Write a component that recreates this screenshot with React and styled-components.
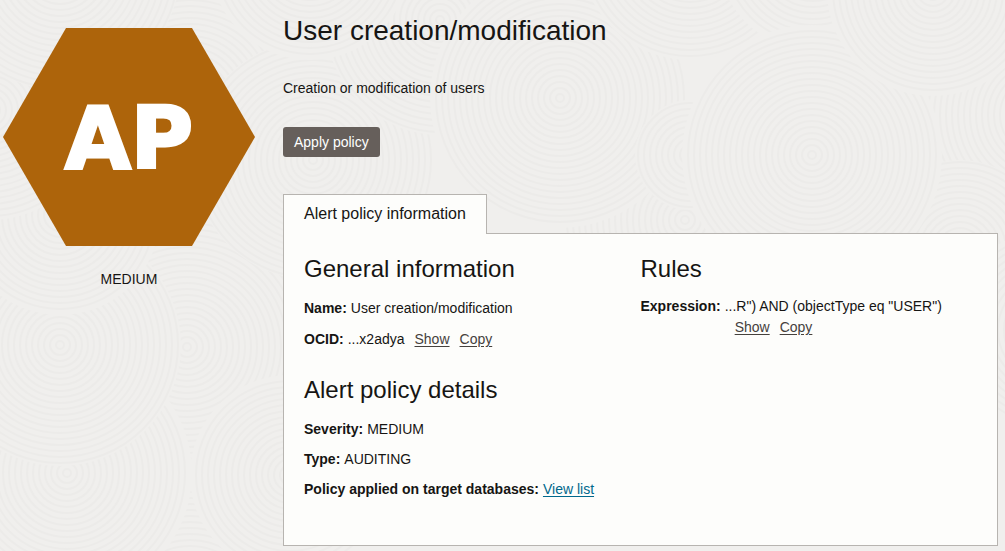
import React from "react";
import styled, { createGlobalStyle } from "styled-components";

const GlobalStyle = createGlobalStyle`
  *, *::before, *::after { box-sizing: border-box; }
  body {
    margin: 0;
    background: #f0efed;
    color: #161513;
    font-family: "Liberation Sans", Arial, sans-serif;
    font-size: 14px;
    line-height: 20px;
  }
`;

const Page = styled.div`
  position: relative;
  min-height: 100vh;
  overflow: hidden;
`;

const Backdrop = styled.svg`
  position: absolute;
  inset: 0;
  width: 100%;
  height: 100%;
  fill: none;
  stroke: #ecebe9;
  stroke-width: 2;
`;

const Layout = styled.div`
  position: relative;
  display: grid;
  grid-template-columns: 258px minmax(0, 1fr);
  column-gap: 25px;
  padding: 13px 7px 5px 0;
`;

const Sidebar = styled.aside`
  display: flex;
  flex-direction: column;
  align-items: center;
  gap: 23px;
  padding-top: 15px;
`;

const Hexagon = styled.div`
  display: flex;
  align-items: center;
  justify-content: center;
  width: 252px;
  height: 218px;
  padding-top: 2px;
  background: #ad640b;
  clip-path: polygon(25% 0, 75% 0, 100% 50%, 75% 100%, 25% 100%, 0 50%);
  color: #fff;
  font-family: "DejaVu Sans", "Arial Black", sans-serif;
  font-size: 85px;
  font-weight: 700;
  line-height: 1;
  -webkit-text-stroke: 3px #fff;
`;

const Status = styled.span``;

const Main = styled.main`
  display: flex;
  flex-direction: column;
  align-items: flex-start;
`;

const Title = styled.h1`
  margin: 0 0 29px;
  font-size: 28px;
  font-weight: 400;
  line-height: 36px;
`;

const Description = styled.p`
  margin: 0 0 29px;
`;

const PrimaryButton = styled.button`
  height: 30px;
  margin: 0 0 37px;
  padding: 0 11px;
  border: 0;
  border-radius: 3px;
  background: #665f5b;
  color: #fff;
  font: inherit;
  cursor: pointer;
`;

const Tab = styled.button`
  position: relative;
  z-index: 1;
  height: 40px;
  margin-bottom: -1px;
  padding: 0 20px 2px;
  border: 1px solid #b7b4b0;
  border-bottom: 0;
  background: #fdfdfb;
  color: inherit;
  font: inherit;
  font-size: 16px;
  cursor: pointer;
`;

const Panel = styled.section`
  display: grid;
  grid-template-columns: 1fr 1fr;
  align-self: stretch;
  padding: 20px 20px 45px;
  border: 1px solid #b7b4b0;
  background: #fdfdfb;
`;

const Column = styled.div`
  display: flex;
  flex-direction: column;
  gap: 25px;
`;

const Heading = styled.h2`
  margin: 0;
  font-size: 24px;
  font-weight: 400;
  line-height: 30px;
`;

const Details = styled.dl`
  display: flex;
  flex-direction: column;
  gap: ${(p) => p.$gap || 9}px;
  margin: ${(p) => p.$top || 14}px 0 0;
`;

const Row = styled.div`
  display: flex;
  gap: 4px;
  line-height: 21px;
`;

const Label = styled.dt`
  flex: none;
  font-weight: 700;
`;

const Value = styled.dd`
  margin: 0;
`;

const Link = styled.a`
  color: #00688c;
  text-decoration: underline;
  text-underline-offset: 2px;
`;

const Action = styled(Link)`
  display: inline-block;
  margin-left: 10px;
  color: #45413d;
`;

const discs = [
  [187, 347, 130], [440, 345, 125], [-20, 500, 110], [190, 610, 120],
  [67, 473, 125], [290, 475, 100], [60, 345, 121], [60, 215, 100],
  [190, 100, 125], [-10, 110, 110], [60, -30, 120], [313, 160, 120],
  [440, 20, 115], [310, -40, 100], [685, 220, 125], [560, 98, 130],
  [690, -50, 110], [690, 155, 55], [1040, 115, 115], [960, 250, 90],
  [813, -45, 95], [812, 155, 130], [933, -10, 106], [1050, 330, 100],
];

function Waves() {
  return (
    <Backdrop aria-hidden="true">
      {discs.map(([x, y, radius]) => (
        <g key={`${x},${y}`}>
          <circle cx={x} cy={y} r={radius} fill="#f0efed" stroke="none" />
          {Array.from({ length: Math.floor(radius / 6) }, (_, i) => (
            <circle key={i} cx={x} cy={y} r={4 + i * 6} />
          ))}
        </g>
      ))}
    </Backdrop>
  );
}

export default function App() {
  return (
    <Page>
      <GlobalStyle />
      <Waves />
      <Layout>
        <Sidebar>
          <Hexagon>AP</Hexagon>
          <Status>MEDIUM</Status>
        </Sidebar>
        <Main>
          <Title>User creation/modification</Title>
          <Description>Creation or modification of users</Description>
          <PrimaryButton type="button">Apply policy</PrimaryButton>
          <Tab type="button" role="tab" id="info-tab" aria-selected="true" aria-controls="info-panel">
            Alert policy information
          </Tab>
          <Panel role="tabpanel" id="info-panel" aria-labelledby="info-tab">
            <Column>
              <div>
                <Heading>General information</Heading>
                <Details $gap={10}>
                  <Row>
                    <Label>Name:</Label>
                    <Value>User creation/modification</Value>
                  </Row>
                  <Row>
                    <Label>OCID:</Label>
                    <Value>
                      ...x2adya<Action href="#show-ocid">Show</Action>
                      <Action href="#copy-ocid">Copy</Action>
                    </Value>
                  </Row>
                </Details>
              </div>
              <div>
                <Heading>Alert policy details</Heading>
                <Details>
                  <Row>
                    <Label>Severity:</Label>
                    <Value>MEDIUM</Value>
                  </Row>
                  <Row>
                    <Label>Type:</Label>
                    <Value>AUDITING</Value>
                  </Row>
                  <Row>
                    <Label>Policy applied on target databases:</Label>
                    <Value><Link href="#targets">View list</Link></Value>
                  </Row>
                </Details>
              </div>
            </Column>
            <Column>
              <div>
                <Heading>Rules</Heading>
                <Details $top={12}>
                  <Row>
                    <Label>Expression:</Label>
                    <Value>
                      ...R") AND (objectType eq "USER")<Action href="#show-rule">Show</Action>
                      <Action href="#copy-rule">Copy</Action>
                    </Value>
                  </Row>
                </Details>
              </div>
            </Column>
          </Panel>
        </Main>
      </Layout>
    </Page>
  );
}
